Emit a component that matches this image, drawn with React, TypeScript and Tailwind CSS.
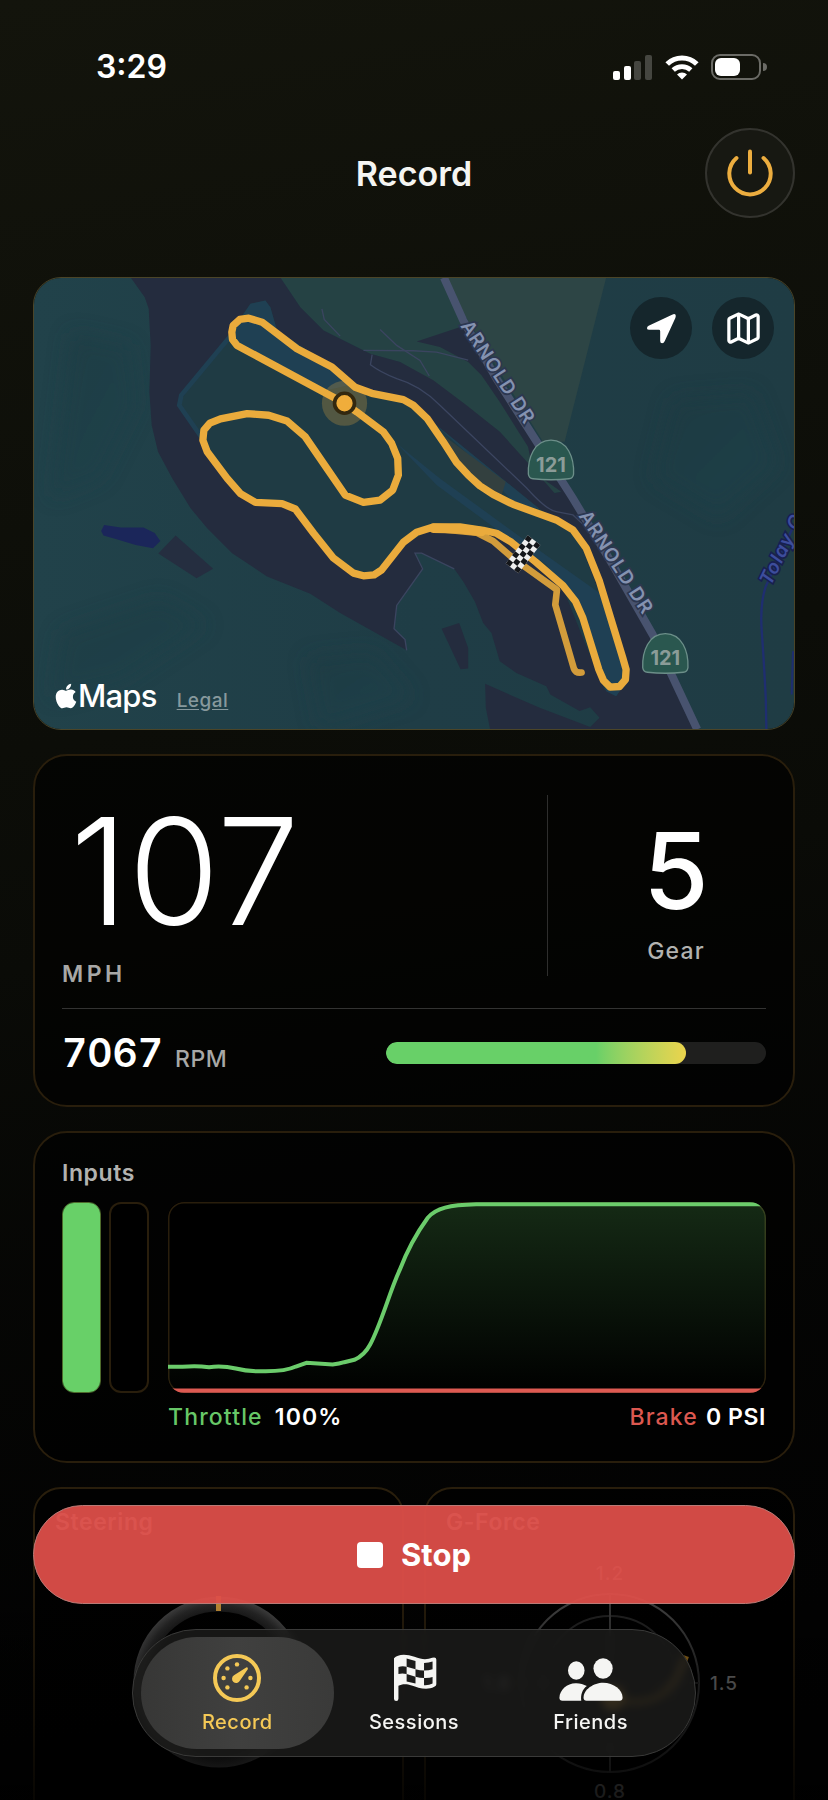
import React, { useState } from 'react';
import { Map as MapIcon } from 'lucide-react';
import { FaApple } from 'react-icons/fa';

type TabId = 'record' | 'sessions' | 'friends';

interface Telemetry {
  speed: number;
  gear: number;
  rpm: number;
  rpmPercent: number;
  throttle: number;
  brake: number;
}

const telemetry: Telemetry = {
  speed: 107,
  gear: 5,
  rpm: 7067,
  rpmPercent: 79,
  throttle: 100,
  brake: 0
};

const FONT = 'Inter, "Liberation Sans", sans-serif';

const StatusBar: React.FC = () => (
  <div className="mt-12 flex h-[38px] items-center justify-between pr-[61px] pl-24">
    <span className="text-[32px] leading-none font-semibold">3:29</span>
    <div className="flex items-center gap-3">
      <svg className="h-[25px] w-10" viewBox="0 0 40 25" fill="#fff">
        <rect x="0" y="16" width="7" height="9" rx="2" />
        <rect x="11" y="11" width="7" height="14" rx="2" />
        <rect x="21" y="6" width="7" height="19" rx="2" opacity="0.22" />
        <rect x="32" y="0" width="7" height="25" rx="2" opacity="0.22" />
      </svg>
      <svg className="h-[25px] w-[34px]" viewBox="0 0 34 25" fill="none" stroke="#fff">
        <path d="M2.2 9 A21.3 21.3 0 0 1 31.8 9" strokeWidth="5.2" />
        <path d="M8.2 15 A13 13 0 0 1 25.8 15" strokeWidth="4.8" />
        <path d="M12 19.6 A7 7 0 0 1 22 19.6 L17 24.6 Z" fill="#fff" stroke="none" />
      </svg>
      <svg className="h-[26px] w-14" viewBox="0 0 56 26" fill="none">
        <rect x="1" y="1" width="48" height="24" rx="8" stroke="#6b6b66" strokeWidth="2" />
        <rect x="4" y="4" width="25" height="18" rx="6" fill="#fff" />
        <path d="M52 9 a4 4 0 0 1 0 8 z" fill="#6b6b66" />
      </svg>
    </div>
  </div>
);

const Header: React.FC = () => (
  <header className="mt-[42px] grid grid-cols-[1fr_auto_1fr] items-center px-[33px]">
    <h1 className="col-start-2 pt-0.5 text-[34px] leading-none font-semibold text-[#f5f5f2]">Record</h1>
    <button
      type="button"
      aria-label="Power"
      className="flex h-[90px] w-[90px] items-center justify-center justify-self-end rounded-full border-2 border-[#33332e] bg-[#171812]"
    >
      <svg className="h-12 w-12" viewBox="0 0 48 48" fill="none" stroke="#ecad3f" strokeWidth="4" strokeLinecap="round">
        <path d="M10.5 9 A20.7 20.7 0 1 0 37.5 9" />
        <path d="M24 2.5 V23.5" />
      </svg>
    </button>
  </header>
);

const Shield: React.FC<{ x: number; y: number }> = ({ x, y }) => (
  <g transform={`translate(${x} ${y})`}>
    <path
      d="M-68 104 C-70 55 -50 2 0 2 C50 2 70 55 68 104 Q66 117 54 118 Q0 124 -54 118 Q-66 117 -68 104 Z"
      fill="#2a574f"
      stroke="#6c8f89"
      strokeWidth="4"
    />
    <text x="0" y="97" textAnchor="middle" fontSize="60" fontWeight="700" fill="#8b9c98">121</text>
  </g>
);

const flagCells = Array.from({ length: 21 }, (_, i) => ({ col: i % 3, row: Math.floor(i / 3) }));

const TrackMap: React.FC = () => (
  <svg
    className="block h-full w-full"
    viewBox="39 36 2286 1359"
    preserveAspectRatio="xMidYMid slice"
    fontFamily={FONT}
    role="img"
    aria-label="Track map"
  >
    <defs>
      <linearGradient id="land" x1="0" y1="0" x2="1" y2="0">
        <stop offset="0" stopColor="#21424a" />
        <stop offset="0.5" stopColor="#1f3d46" />
        <stop offset="1" stopColor="#1f3c44" />
      </linearGradient>
      <linearGradient id="hill" x1="0" y1="0" x2="1" y2="1">
        <stop offset="0" stopColor="#1b3840" />
        <stop offset="1" stopColor="#21454d" />
      </linearGradient>
      <filter id="soft"><feGaussianBlur stdDeviation="30" /></filter>
    </defs>
    <rect x="39" y="36" width="2286" height="1359" fill="url(#land)" />
    <g filter="url(#soft)" fill="url(#hill)" opacity="0.5">
      <path d="M150 200 L330 240 L350 420 L240 640 L90 700 Z" />
      <path d="M120 1100 L420 1000 L560 1080 L300 1250 L90 1300 Z" />
      <path d="M860 1180 L1060 1160 L1180 1300 L900 1390 Z" />
      <path d="M1960 400 L2200 380 L2280 600 L2100 760 L1900 640 Z" />
    </g>

    {/* Terrain */}
    <path d="M780 36 L1265 36 L1580 560 L1625 680 L1600 684 L1440 500 L1240 350 L1140 290 L1050 265 L910 195 L840 125 Z" fill="#254244" />
    <path d="M1265 36 H1760 L1635 530 H1570 Z" fill="#2d4545" />
    <path
      d="M330 36 L372 95 L384 130 L390 240 L386 380 L393 480 L412 560 L455 640 L510 730 L560 790 L635 865 L740 935 L870 987 L960 1045 L1160 1157 L1155 1125 L1122 1092 L1130 1022 L1208 912 L1185 865 L1205 865 L1303 912 L1330 950 L1365 1010 L1390 1075 L1415 1105 L1440 1190 L1490 1225 L1580 1265 L1592 1290 L1680 1340 L1712 1328 L1740 1360 L1712 1388 L1560 1330 L1396 1258 L1398 1330 L1411 1395 H2030 L1900 1100 L1760 860 L1660 690 L1560 540 L1440 340 L1335 180 L1190 228 L1260 245 L1345 290 L1385 330 L1440 410 L1490 490 L1525 545 L1540 620 L1625 680 L1605 685 L1540 610 L1440 500 L1340 420 L1240 345 L1140 290 L1050 265 L910 195 L840 125 L780 36 Z"
      fill="#242c3e"
    />
    <path d="M1265 1092 L1318 1075 L1345 1150 L1345 1212 L1322 1214 Z" fill="#242c3e" />
    <path d="M465 812 L578 912 L528 940 L413 866 Z" fill="#252e40" />
    <path d="M241 798 L250 780 L300 788 L368 788 L402 804 L419 828 L397 850 L345 840 L290 824 L248 812 Z" fill="#1b265a" />

    {/* Infield */}
    <path
      d="M470 418 L620 215 L690 115 L735 105 L750 125 L770 195 L930 300 L1000 370 L1160 410 L1225 460 L1560 732 L1620 770 L1680 830 L1730 960 L1828 1240 L1790 1295 L1755 1275 L1690 1120 L1630 970 L1430 800 L1240 790 L1150 840 L1085 915 L1030 935 L940 880 L820 730 L705 712 L620 640 L545 525 Z"
      fill="#1f3b44"
    />
    <path d="M625 210 L690 115 L735 105 L750 125 L770 195 L930 300 L985 360 L920 375 L800 310 L650 230 Z" fill="#1f4053" />
    <path d="M630 212 L482 390 L476 420 L542 515" fill="none" stroke="#1f4053" strokeWidth="14" />
    <path d="M1130 535 L1260 640 L1500 815 L1740 985 L1828 1240 L1790 1295 L1760 1280 L1690 1060 L1580 900 L1480 830 L1250 660 Z" fill="#1f4054" />
    <path d="M1225 460 L1560 732 L1490 722 L1380 600 Z" fill="#1f4053" />
    <path d="M1270 510 L1350 570 L1458 650 L1445 692 L1360 640 L1305 570 Z" fill="#33403f" />

    {/* Paths and roads */}
    <g fill="none" stroke="#3b4560" strokeWidth="4">
      <path d="M905 130 L912 162 L960 212" />
      <path d="M1030 255 L1180 256 L1250 260 L1345 284" />
      <path d="M1080 192 L1130 240 L1200 285 L1228 332" />
      <path d="M1056 268 L1051 298 Q1080 320 1130 340 Q1200 360 1260 420 L1520 668 Q1580 735 1610 740 L1660 750 L1688 776" />
      <path d="M1160 1157 L1155 1125 L1122 1092 L1130 1022 L1208 912 L1185 865 L1205 865 L1303 912" />
    </g>
    <path d="M1272 36 L1330 165 L1430 340 L1545 520 L1660 700 L1780 900 L1900 1110 L2034 1395" fill="none" stroke="#48536f" strokeWidth="24" />
    <path d="M2325 780 L2240 965 Q2222 1020 2228 1100 T2240 1300 L2242 1395" fill="none" stroke="#1f2e70" strokeWidth="7" />
    <path d="M2322 1160 L2318 1290" fill="none" stroke="#1f2e70" strokeWidth="6" />

    <g fontSize="57" fontWeight="600" textAnchor="middle" fill="#8492b0" stroke="#2c3750" strokeWidth="10" paintOrder="stroke" letterSpacing="3">
      <text transform="translate(1418 331) rotate(57)">ARNOLD DR</text>
      <text transform="translate(1774 903) rotate(57)">ARNOLD DR</text>
      <text transform="translate(2255 965) rotate(-64)" textAnchor="start" fontStyle="italic" fill="#3d4d9c" stroke="#18204f">Tolay C</text>
    </g>
    <Shield x={1594} y={523} />
    <Shield x={1938} y={1105} />

    {/* Driven line */}
    <g fill="none" strokeLinecap="round" strokeLinejoin="round">
      <path d="M1260 793 L1370 803 L1420 828 L1480 880 L1612 975 L1607 1020 L1663 1212 Q1668 1226 1686 1224" stroke="#d29c3b" strokeWidth="20" />
      <path
        d="M973 414 L650 240 L636 222 L634 200 L638 180 L658 162 L685 158 L725 170 L830 250 L935 305 L1005 366 L1055 384 L1150 403 L1180 420 L1222 460 L1270 530 L1310 592 L1345 630 L1380 662 L1420 688 L1480 718 L1540 740 L1610 765 L1660 795 L1700 850 L1740 950 L1810 1180 L1820 1215 L1818 1245 L1800 1266 L1772 1268 L1752 1248 L1738 1215 L1690 1060 L1668 1010 L1630 962 L1550 893 L1475 832 L1430 805 L1390 796 L1320 786 L1240 786 L1190 802 L1150 832 L1085 915 L1062 930 L1030 933 L1000 925 L940 880 L880 805 L825 732 L785 716 L705 712 L660 686 L620 640 L560 560 L547 525 L550 495 L568 474 L600 461 L680 445 L745 450 L800 467 L855 515 L920 610 L975 690 L1030 712 L1080 705 L1118 675 L1135 630 L1133 580 L1115 535 L1090 500 L1010 440 Z"
        stroke="#eaab3c"
        strokeWidth="22"
      />
      <path d="M1240 790 L1320 792 L1385 800" stroke="#eaab3c" strokeWidth="28" />
    </g>

    {/* Start / finish */}
    <g transform="translate(1510 868) rotate(38)">
      <rect x="-24" y="-54" width="48" height="108" fill="#eee" />
      {flagCells.filter(c => (c.col + c.row) % 2 === 0).map(c => (
        <rect key={`${c.col}-${c.row}`} x={-24 + c.col * 16} y={-54 + c.row * 15.4} width="16" height="15.4" fill="#14161a" />
      ))}
    </g>

    {/* Current position */}
    <circle cx="973" cy="414" r="68" fill="#eaab3c" opacity="0.25" />
    <circle cx="973" cy="414" r="30" fill="#f0ad3b" stroke="#33280f" strokeWidth="11" />
  </svg>
);

const LocationIcon: React.FC = () => (
  <svg className="h-[31px] w-[31px]" viewBox="732 142 94 94" fill="#fff">
    <path d="M740 181 L811 147 Q826 141 821 157 L789 227 Q786 234 781 234 Q775 234 775 227 V197 Q775 193 771 193 H742 Q735 193 735 188 Q735 184 740 181 Z" />
  </svg>
);

const MapCard: React.FC = () => (
  <section className="relative aspect-[762/453] w-full overflow-hidden rounded-[28px] border border-[#4b4528]">
    <TrackMap />
    <div className="absolute top-[19px] right-5 flex gap-5">
      <button type="button" aria-label="Center on car" className="flex h-[62px] w-[62px] items-center justify-center rounded-full bg-[#15262c]">
        <LocationIcon />
      </button>
      <button type="button" aria-label="Map style" className="flex h-[62px] w-[62px] items-center justify-center rounded-full bg-[#15262c]">
        <MapIcon className="h-[39px] w-[39px]" strokeWidth={2} />
      </button>
    </div>
    <div className="absolute bottom-[13px] left-5 flex items-baseline">
      <FaApple className="h-7 w-6 self-center" />
      <span className="text-[31px] leading-10 font-medium tracking-tight">Maps</span>
      <a href="#legal" className="ml-5 text-[19px] font-medium tracking-wide text-[#87999d] underline underline-offset-2">Legal</a>
    </div>
  </section>
);

const StatsCard: React.FC<{ data: Telemetry }> = ({ data }) => (
  <section className="rounded-[34px] border-2 border-[#291e0c] bg-black/60 px-[27px] pt-[39px] pb-[33px]">
    <div className="flex items-start justify-between">
      <div>
        <div className="pl-2 text-[148px] leading-[154px] font-light">{data.speed}</div>
        <div className="mt-[11px] text-[23px] leading-7 font-semibold tracking-[0.15em] text-[#a8a8a6]">MPH</div>
      </div>
      <div className="flex h-[181px] w-[219px] flex-col items-center border-l border-[#2e2e2d] pt-6 pl-[38px]">
        <div className="text-[106px] leading-[104px] font-medium">{data.gear}</div>
        <div className="mt-[14px] text-[23px] leading-7 font-medium tracking-wider text-[#b2b2b0]">Gear</div>
      </div>
    </div>
    <div className="mt-5 h-px bg-[#333332]" />
    <div className="mt-[25px] flex h-[38px] items-center justify-between">
      <div className="flex items-baseline gap-3">
        <span className="text-[39px] leading-[38px] font-semibold tabular-nums">{data.rpm}</span>
        <span className="text-[23px] leading-7 font-medium tracking-wide text-[#a8a8a6]">RPM</span>
      </div>
      <div className="h-[22px] w-[54%] overflow-hidden rounded-full bg-[#1f1f1e]">
        <div
          className="h-full rounded-full bg-linear-to-r from-[#68d068] from-70% to-[#ebd44c]"
          style={{ width: `${data.rpmPercent}%` }}
        />
      </div>
    </div>
  </section>
);

const throttleLine =
  'M447 742 H490 Q530 738 570 743 Q610 738 650 747 Q690 757 740 755 Q800 755 830 741 L862 730 L940 735 Q960 733 975 728 L1005 721 Q1035 708 1052 676 C1085 615 1110 520 1140 455 C1165 390 1190 345 1225 297 C1250 268 1290 259 1370 257 H2238';

const InputsCard: React.FC<{ data: Telemetry }> = ({ data }) => (
  <section className="rounded-[34px] border-2 border-[#291e0c] bg-black/60 px-[27px] pt-[26px] pb-[30px]">
    <h2 className="text-[23px] leading-7 font-semibold tracking-wide text-[#b2b2b0]">Inputs</h2>
    <div className="mt-[15px] flex">
      <div className="flex h-[191px] w-[39px] flex-col justify-end overflow-hidden rounded-xl border border-[#4d6a2b] bg-black">
        <div className="bg-[#68d068]" style={{ height: `${data.throttle}%` }} />
      </div>
      <div className="ml-2 flex h-[191px] w-10 flex-col justify-end overflow-hidden rounded-xl border-2 border-[#291e0c] bg-black">
        <div className="bg-[#dd5a52]" style={{ height: `${data.brake}%` }} />
      </div>
      <div className="ml-[19px] min-w-0 flex-1">
        <div className="grid h-[191px]">
          <svg className="col-start-1 row-start-1 block h-[191px] w-full rounded-2xl bg-black" viewBox="447 250 1791 570" preserveAspectRatio="none" fill="none">
            <defs>
              <linearGradient id="throttleFill" x1="0" y1="0" x2="0" y2="1">
                <stop offset="0" stopColor="#68d068" stopOpacity="0.2" />
                <stop offset="1" stopColor="#68d068" stopOpacity="0" />
              </linearGradient>
            </defs>
            <rect x="449" y="252" width="1787" height="566" rx="46" stroke="#291e0c" strokeWidth="5" />
            <path d={`${throttleLine} V820 H447 Z`} fill="url(#throttleFill)" />
            <path d={throttleLine} stroke="#6bcc6b" strokeWidth="12" />
            <path d="M447 813 H2238" stroke="#dd5a52" strokeWidth="13" />
          </svg>
        </div>
        <div className="mt-[10px] flex justify-between text-[23px] leading-7">
          <span className="flex gap-3">
            <span className="font-medium tracking-wider text-[#67c767]">Throttle</span>
            <span className="font-semibold tracking-wider">{data.throttle}%</span>
          </span>
          <span className="flex gap-2">
            <span className="font-medium tracking-wider text-[#dc5850]">Brake</span>
            <span className="font-semibold tracking-wide">{data.brake} PSI</span>
          </span>
        </div>
      </div>
    </div>
  </section>
);

const GaugeCards: React.FC = () => (
  <section className="grid grid-cols-2 gap-5">
    <div className="h-[420px] rounded-[28px] border-2 border-[#291e0c] bg-black/60 px-5 pt-[19px]">
      <h2 className="text-[23px] leading-7 font-semibold tracking-wide text-[#b2b2b0]">Steering</h2>
      <svg className="mx-auto mt-15 block h-[172px] w-[172px]" viewBox="0 0 172 172" fill="none">
        <defs>
          <radialGradient id="rim" gradientUnits="userSpaceOnUse" cx="86" cy="86" r="86">
            <stop offset="0.8" stopColor="#1a1a1a" />
            <stop offset="0.9" stopColor="#2a2a2a" />
            <stop offset="1" stopColor="#474747" />
          </radialGradient>
        </defs>
        <circle cx="86" cy="86" r="78" stroke="url(#rim)" strokeWidth="15" />
        <path d="M8 90 H60 M112 90 H164 M86 116 V150" stroke="#242424" strokeWidth="16" />
        <circle cx="86" cy="90" r="28" fill="#242424" />
        <rect x="83" y="0" width="5" height="15" fill="#d0973a" />
      </svg>
    </div>
    <div className="h-[420px] rounded-[28px] border-2 border-[#291e0c] bg-black/60 px-5 pt-[19px]">
      <h2 className="text-[23px] leading-7 font-semibold tracking-wide text-[#b2b2b0]">G-Force</h2>
      <svg className="mx-auto mt-6 block h-[250px] w-[300px]" viewBox="0 0 300 250" fill="none" fontFamily={FONT}>
        <defs>
          <linearGradient id="ring" x1="0" y1="0" x2="0" y2="1">
            <stop offset="0" stopColor="#4a4a4a" />
            <stop offset="0.5" stopColor="#2e2e2e" />
            <stop offset="1" stopColor="#333" />
          </linearGradient>
        </defs>
        <circle cx="150" cy="123" r="89" stroke="url(#ring)" strokeWidth="2" />
        <circle cx="150" cy="123" r="67" stroke="#242424" strokeWidth="2" />
        <path d="M150 34 V212" stroke="#3a3a3a" strokeWidth="2" />
        <path d="M61 123 H239" stroke="#222" strokeWidth="2" />
        <path d="M152 138 Q175 146 195 138 T226 96" stroke="#c98f24" strokeWidth="6" opacity="0.8" />
        <circle cx="153" cy="138" r="12" fill="#ffb83b" />
        <g fontSize="19" fontWeight="500" letterSpacing="1" fill="#7a7a7a" textAnchor="middle">
          <text x="150" y="20">1.2</text>
          <text x="264" y="130">1.5</text>
          <text x="150" y="238">0.8</text>
          <text x="37" y="130">1.8</text>
        </g>
      </svg>
    </div>
  </section>
);

const GaugeIcon: React.FC = () => (
  <svg className="h-12 w-12" viewBox="0 0 48 48" fill="currentColor">
    <circle cx="24" cy="24" r="22" fill="none" stroke="currentColor" strokeWidth="4" />
    <circle cx="24" cy="10.4" r="2.2" />
    <circle cx="14.4" cy="14.4" r="2.2" />
    <circle cx="10.6" cy="24" r="2.2" />
    <circle cx="37.4" cy="24" r="2.2" />
    <circle cx="14.4" cy="33.4" r="2.2" />
    <circle cx="33.6" cy="33.4" r="2.2" />
    <path d="M33.2 13.4 Q35.4 13 34.8 15.2 L27 26.6 A4.2 4.2 0 1 1 21 21.2 Z" />
  </svg>
);

const FlagIcon: React.FC = () => (
  <svg className="ml-1 h-12 w-[43px]" viewBox="0 0 126 140" fill="currentColor">
    <path d="M0 12 C10 0 35 -2 60 8 C82 17 98 16 112 11 Q124 8 124 16 V88 Q124 93 118 96 C95 108 70 98 52 92 C35 86 22 88 13 93 V131 a6.5 6.5 0 0 1 -13 0 Z" />
    <g fill="#1c1c1b">
      <path d="M37 13 L63 20 V44 L37 37 Z" />
      <path d="M88 26 Q102 26 113 22 V44 Q102 48 88 48 Z" />
      <path d="M13 38 Q24 33 37 37 V58 Q24 55 13 58 Z" />
      <path d="M63 44 Q76 48 88 48 V70 Q76 70 63 66 Z" />
      <path d="M37 58 L63 66 V86 L37 80 Z" />
      <path d="M88 70 Q102 71 113 67 V86 Q102 92 88 91 Z" />
    </g>
  </svg>
);

const FriendsIcon: React.FC = () => (
  <svg className="mt-1 h-[43px] w-16" viewBox="480 560 193 130" fill="currentColor">
    <ellipse cx="532" cy="598" rx="25" ry="28" />
    <ellipse cx="613" cy="592" rx="29" ry="31" />
    <path d="M481 680 C482 655 505 635 532 636 c12 0 22 3 32 9 C550 655 545 672 547 689 H490 q-9 0 -9 -9 Z" />
    <path d="M554 680 C554 655 585 635 613 635 C645 635 672 657 672 680 q0 9 -9 9 h-100 q-9 0 -9 -9 Z" />
  </svg>
);

const tabs: Array<{ id: TabId; label: string; icon: React.ReactNode }> = [
  { id: 'record', label: 'Record', icon: <GaugeIcon /> },
  { id: 'sessions', label: 'Sessions', icon: <FlagIcon /> },
  { id: 'friends', label: 'Friends', icon: <FriendsIcon /> }
];

export default function App() {
  const [activeTab, setActiveTab] = useState<TabId>('record');

  return (
    <div className="relative h-screen overflow-hidden bg-[#030302] bg-linear-170 from-[#13140c] via-[#0a0b07] via-50% to-[#020202] to-90% font-[Inter,'Liberation_Sans',sans-serif] text-white">
      <StatusBar />
      <Header />

      <main className="mt-[59px] flex flex-col gap-6 px-[33px]">
        <MapCard />
        <StatsCard data={telemetry} />
        <InputsCard data={telemetry} />
        <GaugeCards />
      </main>

      {/* Floating controls */}
      <div className="absolute inset-x-0 bottom-0 flex flex-col items-center bg-linear-to-b from-transparent from-20% to-black/80 px-[33px] pb-[43px]">
        <button
          type="button"
          className="flex h-[99px] w-full items-center justify-center gap-[18px] rounded-full border border-[#b97a76] bg-[#dc4e49]/95"
        >
          <span className="h-[26px] w-[26px] rounded bg-white" />
          <span className="text-[31px] leading-none font-bold">Stop</span>
        </button>

        <nav className="mt-[25px] w-full max-w-[564px] rounded-full border border-[#3a3a39] bg-[#1d1d1c]/80 px-4 backdrop-blur-xs">
          <div className="grid h-[126px] grid-cols-3">
            {tabs.map(tab => {
              const active = tab.id === activeTab;
              return (
                <button
                  key={tab.id}
                  type="button"
                  aria-current={active ? 'page' : undefined}
                  onClick={() => setActiveTab(tab.id)}
                  className={`relative flex flex-col items-center justify-center gap-1.5 pt-[3px] ${active ? 'text-[#f5c956]' : 'text-[#f5f5f3]'}`}
                >
                  {active && (
                    <span className="absolute -inset-x-2 inset-y-[7px] rounded-full bg-linear-to-r from-[#373736] via-[#40403f] to-[#3a3a39]" />
                  )}
                  <span className="relative flex h-12 items-center">{tab.icon}</span>
                  <span className="relative text-xl leading-7 font-medium tracking-wide">{tab.label}</span>
                </button>
              );
            })}
          </div>
        </nav>
      </div>
    </div>
  );
}
